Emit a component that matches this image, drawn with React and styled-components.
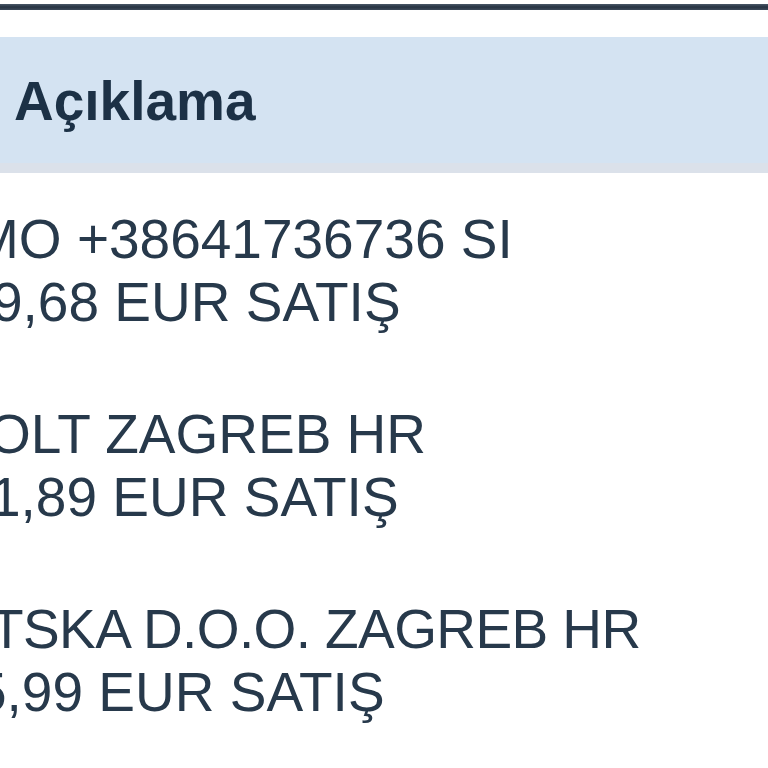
import React from "react";
import styled, { createGlobalStyle } from "styled-components";

const rows = [
  { lines: [{ text: "MO +38641736736 SI", shift: -27 }, { text: "9,68 EUR SATIŞ", shift: -8 }] },
  { lines: [{ text: "OLT ZAGREB HR", shift: -12 }, { text: "1,89 EUR SATIŞ", shift: -10 }] },
  { lines: [{ text: "TSKA D.O.O. ZAGREB HR", shift: -10, tight: true }, { text: "5,99 EUR SATIŞ", shift: -24 }] },
];

const App = () => {
  return (
    <Page>
      <GlobalStyle />
      <TopRule />
      <Table>
        <HeaderRow>
          <HeaderCell>Açıklama</HeaderCell>
        </HeaderRow>
        {rows.map((row, i) => (
          <Row key={i}>
            {row.lines.map((line, j) => (
              <Line key={j} $shift={line.shift} $tight={line.tight}>
                {line.text}
              </Line>
            ))}
          </Row>
        ))}
      </Table>
    </Page>
  );
};

const GlobalStyle = createGlobalStyle`
  html, body {
    margin: 0;
    padding: 0;
    background: #ffffff;
  }
  body {
    font-family: "Liberation Sans", Arial, sans-serif;
  }
`;

const Page = styled.div`
  width: 768px;
  height: 768px;
  overflow: hidden;
  background: #ffffff;
  padding-top: 4px;
  box-sizing: border-box;
`;

const TopRule = styled.div`
  height: 6px;
  background: linear-gradient(#4a5868, #263342 50%, #3d4a5a);
`;

const Table = styled.div`
  margin-top: 27px;
  display: flex;
  flex-direction: column;
`;

const HeaderRow = styled.div`
  height: 126px;
  background: #d4e3f2;
  border-bottom: 10px solid #dbe1ea;
  display: flex;
  align-items: center;
`;

const HeaderCell = styled.div`
  padding-left: 14px;
  padding-top: 2px;
  font-size: 55px;
  font-weight: bold;
  color: #1c3146;
  white-space: nowrap;
`;

const Row = styled.div`
  padding: 35px 0 34px;
  display: flex;
  flex-direction: column;
`;

const Line = styled.div`
  margin-left: ${(p) => p.$shift}px;
  font-size: 55px;
  line-height: 63px;
  letter-spacing: ${(p) => (p.$tight ? "-0.6px" : "0")};
  color: #27394b;
  white-space: nowrap;
`;

export default App;
